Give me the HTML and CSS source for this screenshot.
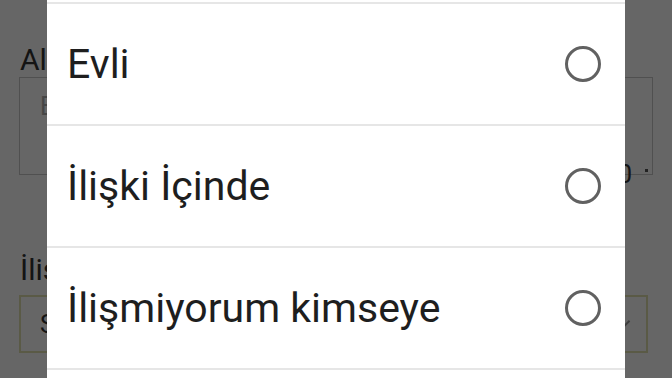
FILE: index.html
```html
<!DOCTYPE html>
<html lang="tr">
<head>
  <meta charset="UTF-8">
  <title>İlişki Durumu</title>
  <link rel="stylesheet" href="styles.css">
</head>
<body>
  <div class="page">
    <div class="field">
      <label class="field-label">Alıntı</label>
      <div class="textbox">
        <span class="placeholder">En sevdiğin söz</span>
        <span class="resize-dot"></span>
      </div>
      <span class="counter">0</span>
    </div>

    <div class="field field-select">
      <label class="field-label">İlişki Durumu</label>
      <div class="selectbox">
        <span class="select-value">Seçiniz</span>
        <span class="select-arrow"></span>
      </div>
    </div>
  </div>

  <div class="scrim"></div>

  <div class="dialog">
    <div class="option option-first">
      <span class="option-text">Bekar</span>
      <span class="radio"></span>
    </div>
    <div class="option">
      <span class="option-text">Evli</span>
      <span class="radio"></span>
    </div>
    <div class="option">
      <span class="option-text">İlişki İçinde</span>
      <span class="radio"></span>
    </div>
    <div class="option">
      <span class="option-text">İlişmiyorum kimseye</span>
      <span class="radio"></span>
    </div>
    <div class="option">
      <span class="option-text">Karışık</span>
      <span class="radio"></span>
    </div>
  </div>
</body>
</html>
```

FILE: styles.css
```css
:root {
  --text-color: #1e1e1e;
  --divider: #e6e6e6;
  --radio-color: #616161;
}

body {
  margin: 0;
  width: 672px;
  height: 378px;
  overflow: hidden;
  background: #ffffff;
  font-family: Roboto, 'Noto Sans', sans-serif;
  color: var(--text-color);
  position: relative;
}

.page {
  padding: 44px 19px 0 19px;
}

.field {
  position: relative;
}

.field-label {
  display: block;
  font-size: 30px;
  line-height: 32px;
  color: #333333;
  margin-left: 1px;
}

.textbox {
  position: relative;
  height: 96px;
  margin-top: 1px;
  border: 1px solid #c8c8c8;
  box-sizing: content-box;
  width: 632px;
}

.placeholder {
  display: block;
  padding: 14px 0 0 20px;
  font-size: 25px;
  color: #b0b0b0;
}

.resize-dot {
  position: absolute;
  right: 4px;
  bottom: 2px;
  width: 3px;
  height: 3px;
  background: #555555;
}

.counter {
  position: absolute;
  right: 21px;
  top: 116px;
  font-size: 25px;
  color: #333333;
}

.field-select {
  margin-top: 79px;
}

.selectbox {
  display: flex;
  align-items: center;
  justify-content: space-between;
  height: 58px;
  margin-top: 9px;
  border: 2px solid #e2e0b0;
  width: 629px;
  padding: 0 18px 0 19px;
  box-sizing: border-box;
}

.select-value {
  font-size: 25px;
  color: #333333;
}

.select-arrow {
  width: 9px;
  height: 9px;
  border-right: 2px solid #999999;
  border-bottom: 2px solid #999999;
  transform: rotate(45deg);
  margin-top: -6px;
}

.scrim {
  position: absolute;
  inset: 0;
  background: rgba(0, 0, 0, 0.6);
}

.dialog {
  position: absolute;
  left: 47px;
  top: -118px;
  width: 578px;
  background: #ffffff;
}

.option {
  display: flex;
  align-items: center;
  justify-content: space-between;
  height: 120px;
  padding: 0 24px 0 20px;
  border-top: 2px solid var(--divider);
}

.option-first {
  border-top: none;
}

.option-text {
  font-size: 41px;
  color: var(--text-color);
}

.radio {
  width: 30px;
  height: 30px;
  border: 3.5px solid var(--radio-color);
  border-radius: 50%;
}
```
